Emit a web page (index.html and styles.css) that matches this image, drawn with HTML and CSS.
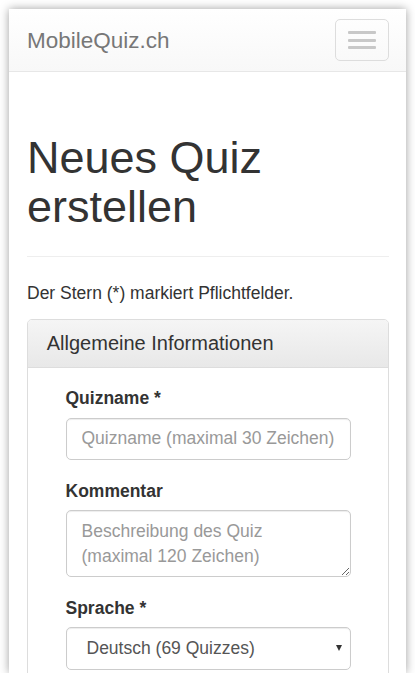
FILE: index.html
```html
<!DOCTYPE html>
<html lang="de">
<head>
<meta charset="utf-8">
<title>MobileQuiz.ch</title>
<link rel="stylesheet" href="styles.css">
</head>
<body>
<div class="screen">
  <nav class="navbar">
    <a class="brand" href="#">MobileQuiz.ch</a>
    <button class="toggle" type="button" aria-label="Menü">
      <span class="bar"></span>
      <span class="bar"></span>
      <span class="bar"></span>
    </button>
  </nav>
  <main class="container">
    <div class="page-header">
      <h1>Neues Quiz erstellen</h1>
    </div>
    <p class="note">Der Stern (*) markiert Pflichtfelder.</p>
    <section class="panel">
      <div class="panel-heading">Allgemeine Informationen</div>
      <div class="panel-body">
        <div class="form-col">
          <div class="form-group">
            <label for="qn">Quizname *</label>
            <input id="qn" class="control" type="text" placeholder="Quizname (maximal 30 Zeichen)">
          </div>
          <div class="form-group">
            <label for="km">Kommentar</label>
            <textarea id="km" class="control area" placeholder="Beschreibung des Quiz (maximal 120 Zeichen)"></textarea>
          </div>
          <div class="form-group">
            <label for="sp">Sprache *</label>
            <div class="select-wrap">
              <select id="sp" class="control select">
                <option>Deutsch (69 Quizzes)</option>
              </select>
              <span class="caret"></span>
            </div>
          </div>
        </div>
      </div>
    </section>
  </main>
</div>
</body>
</html>
```
FILE: styles.css
```css
html, body {
  margin: 0;
  padding: 0;
  background: #ffffff;
}
body {
  font-family: "Liberation Sans", Arial, sans-serif;
  color: #333333;
}
.screen {
  margin: 9px 0 0 9px;
  width: 397px;
  height: 664px;
  overflow: hidden;
  background: #ffffff;
  box-shadow: 0 0 9px rgba(0, 0, 0, 0.38);
}
.navbar {
  height: 62px;
  border-bottom: 1px solid #e7e7e7;
  background: linear-gradient(to bottom, #ffffff 0%, #f8f8f8 100%);
  display: flex;
  align-items: center;
  justify-content: space-between;
  padding: 0 17px 0 18px;
}
.brand {
  font-size: 22.5px;
  color: #777777;
  text-decoration: none;
  line-height: 25px;
}
.toggle {
  width: 54px;
  height: 42px;
  margin: 0;
  padding: 0 0 0 12px;
  border: 1px solid #dddddd;
  border-radius: 5px;
  background: transparent;
  display: flex;
  flex-direction: column;
  justify-content: center;
  align-items: flex-start;
  gap: 4.5px;
  box-sizing: border-box;
}
.bar {
  display: block;
  width: 28px;
  height: 3px;
  border-radius: 1px;
  background: #c8c8c8;
}
.container {
  padding: 0 17px 0 18px;
}
.page-header {
  margin-top: 61px;
  padding-bottom: 25px;
  border-bottom: 1px solid #eeeeee;
}
h1 {
  margin: 0;
  font-size: 45px;
  line-height: 49px;
  font-weight: normal;
  color: #333333;
}
.note {
  margin: 24px 0 12.5px;
  font-size: 17.5px;
  line-height: 25px;
}
.panel {
  border: 1px solid #dddddd;
  border-radius: 5px;
}
.panel-heading {
  padding: 12.5px 18.75px;
  font-size: 20px;
  line-height: 22px;
  color: #333333;
  background: linear-gradient(to bottom, #f5f5f5 0%, #e8e8e8 100%);
  border-bottom: 1px solid #dddddd;
  border-radius: 4px 4px 0 0;
}
.panel-body {
  padding: 18.75px;
}
.form-col {
  padding: 0 18.75px;
}
.form-group {
  margin-bottom: 18.75px;
}
label {
  display: block;
  margin-bottom: 6.25px;
  font-size: 17.5px;
  line-height: 25px;
  font-weight: bold;
  color: #333333;
}
.control {
  display: block;
  width: 100%;
  box-sizing: border-box;
  height: 42.5px;
  padding: 7.5px 15px;
  margin: 0;
  font-family: "Liberation Sans", Arial, sans-serif;
  font-size: 17.5px;
  line-height: 25px;
  color: #555555;
  background: #ffffff;
  border: 1px solid #cccccc;
  border-radius: 5px;
  box-shadow: inset 0 1px 1px rgba(0, 0, 0, 0.075);
}
.control::placeholder {
  color: #999999;
  opacity: 1;
}
.area {
  height: 67px;
  resize: vertical;
}
.select-wrap {
  position: relative;
}
.select {
  appearance: none;
  -webkit-appearance: none;
  padding-left: 20px;
}
.caret {
  position: absolute;
  left: 270px;
  top: 18px;
  width: 0;
  height: 0;
  border-left: 3.5px solid transparent;
  border-right: 3.5px solid transparent;
  border-top: 6px solid #333333;
  pointer-events: none;
}
```
